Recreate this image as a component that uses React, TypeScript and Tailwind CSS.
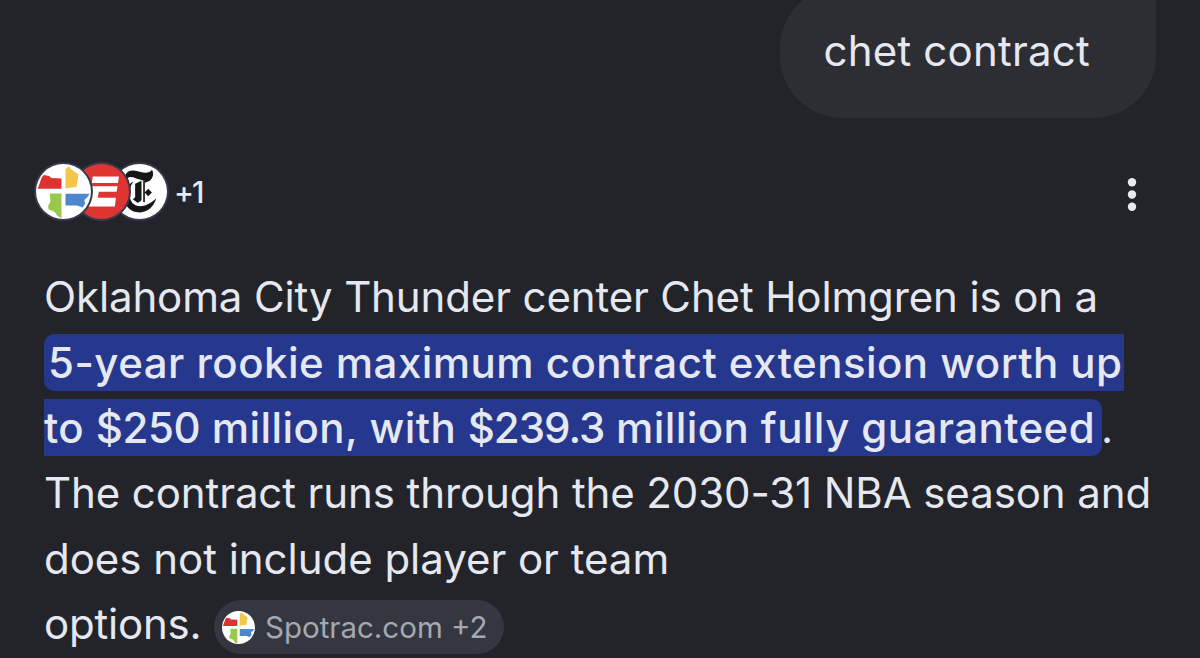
import React from 'react';

interface IconProps {
  className?: string;
}

const SpotracIcon: React.FC<IconProps> = ({ className }) => (
  <svg viewBox="0 0 164 164" className={className}>
    <circle cx="82" cy="82" r="82" fill="#fff" />
    <path d="M5 74 L17 40 L23 33 L39 36 L46 42 L76 43 V74 Z" fill="#dc3330" />
    <path d="M88 73 V15 L99 6 L103 14 L127 31 L124 48 L121 68 Z" fill="#f3c548" />
    <path d="M41 88 H76 V161 L64 155 L56 143 L37 135 L36 125 L43 112 Z" fill="#98c94b" />
    <path d="M88 89 H160 L153 99 L144 107 L147 118 L139 130 L122 124 H88 Z" fill="#4d88cf" />
  </svg>
);

const EspnIcon: React.FC<IconProps> = ({ className }) => (
  <svg viewBox="0 0 164 164" className={className}>
    <circle cx="82" cy="82" r="82" fill="#df3532" />
    <path d="M56 37 H134 L131 57 H53 Z" fill="#fff" />
    <path d="M52 66 H130 L127 83 H74 L71 101 H125 L122 127 H43 Z" fill="#fff" />
  </svg>
);

const TimesIcon: React.FC<IconProps> = ({ className }) => (
  <svg viewBox="0 0 164 164" className={className}>
    <circle cx="82" cy="82" r="82" fill="#fff" />
    <g fill="#161616">
      <path d="M40 44 C38 25 51 16 69 20 C88 24 109 32 119 17 C128 31 120 49 103 50 C80 50 57 31 47 42 C44 45 47 49 52 51 C45 52 41 49 40 44 Z" />
      <path d="M64 52 C51 69 49 91 56 108 C65 130 96 135 132 103 C123 133 98 147 75 144 C46 140 32 115 38 89 C41 72 49 60 64 52 Z" />
      <path d="M69 59 L88 50 V108 L77 116 L62 105 L69 99 Z" />
      <path d="M93 49 H98 V113 H93 Z" />
      <path d="M108 74 L119 85 L108 96 L97 85 Z" />
      <path d="M98 48 L120 40 L113 50 L98 56 Z" />
    </g>
  </svg>
);

const MoreIcon: React.FC<IconProps> = ({ className }) => (
  <svg viewBox="0 0 10 34" className={className} fill="#e8e9f0">
    <circle cx="5" cy="4.2" r="4.2" />
    <circle cx="5" cy="16.5" r="4.2" />
    <circle cx="5" cy="28.8" r="4.2" />
  </svg>
);

const App: React.FC = () => {
  return (
    <div className="flex h-[658px] w-[1200px] flex-col overflow-hidden bg-[#232429] pr-11 pl-11 font-['Inter',sans-serif] text-[42px] whitespace-nowrap text-[#e6e8f1]">
      {/* User query */}
      <div className="-mt-3.5 flex h-[132px] w-[376px] flex-none items-center self-end rounded-[62px] rounded-tr-[12px] bg-[#2d2e33] pb-0.5 pl-[43.5px] leading-none tracking-[0.2px]">
        chet contract
      </div>

      {/* Sources */}
      <div className="mt-11 -ml-[10.5px] flex h-[59px] flex-none items-center">
        <div className="z-20 size-[59px] flex-none rounded-full bg-[#343a4c] p-[2px]">
          <SpotracIcon className="size-[55px]" />
        </div>
        <div className="z-10 -ml-[21px] size-[59px] flex-none rounded-full bg-[#343a4c] p-[2px]">
          <EspnIcon className="size-[55px]" />
        </div>
        <div className="-ml-[20.5px] size-[59px] flex-none rounded-full bg-[#343a4c] p-[2px]">
          <TimesIcon className="size-[55px]" />
        </div>
        <span className="ml-[5px] text-[30px] leading-none font-medium tracking-[-2px]">+1</span>
        <MoreIcon className="mt-1.5 mr-[19px] ml-auto h-[34px] w-[10px]" />
      </div>

      {/* Answer */}
      <div className="mt-[43px] flex-none leading-[57px]">
        <div className="flex h-[65.4px] items-center tracking-[-0.13px]">
          Oklahoma City Thunder center Chet Holmgren is on a
        </div>
        <div className="flex h-[65.4px] items-center font-medium tracking-[0.47px]">
          <span className="h-[57px] w-[1080px] rounded-l-[10px] bg-[#26388e] pl-1">
            5-year rookie maximum contract extension worth up
          </span>
        </div>
        <div className="flex h-[65.4px] items-center">
          <span className="h-[57px] w-[1058px] rounded-r-[10px] bg-[#26388e] font-medium tracking-[0.42px]">
            to <span className="tracking-[-0.4px]">$250</span> million, with{' '}
            <span className="tracking-[-1px]">$239.3</span> million fully guaranteed
          </span>
          <span className="-ml-px">.</span>
        </div>
        <div className="flex h-[65.4px] items-center tracking-[-0.1px]">
          The contract runs through the 2030-31 NBA season and
        </div>
        <div className="flex h-[65.4px] items-center tracking-[-0.03px]">
          does not include player or team
        </div>
        <div className="flex h-[65.4px] items-center">
          <span className="w-[170px] tracking-[-0.2px]">options.</span>
          <span className="mt-[7px] flex h-[54px] w-[290px] items-center rounded-full bg-[#34373f] pl-2 text-[29.5px] text-[#a5a8b2]">
            <SpotracIcon className="mr-2.5 size-[33px]" />
            Spotrac.com +2
          </span>
        </div>
      </div>
    </div>
  );
};

export default App;
